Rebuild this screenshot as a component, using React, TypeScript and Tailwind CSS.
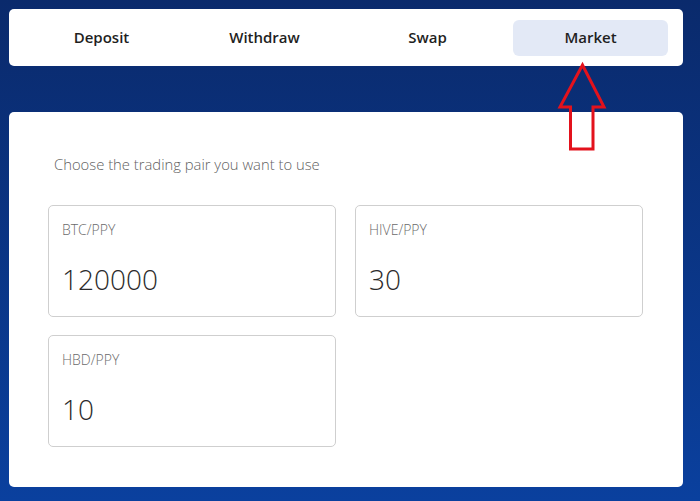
import * as React from "react";

const tabs = ["Deposit", "Withdraw", "Swap", "Market"];

const pairs = [
  { label: "BTC/PPY", value: "120000" },
  { label: "HIVE/PPY", value: "30" },
  { label: "HBD/PPY", value: "10" },
];

function PairBox({ label, value }: { label: string; value: string }) {
  return (
    <div className="flex h-[112px] flex-col rounded-[5px] border border-[#cfcfcf] bg-white pl-[13px] pt-[15px]">
      <span className="text-[14px] font-light leading-[18px] text-[#6b6b6b]">{label}</span>
      <span className="mt-[22px] text-[28px] font-light leading-[36px] text-[#2b2b2b]">{value}</span>
    </div>
  );
}

export default function App() {
  const active = "Market";

  return (
    <div
      className="relative h-[501px] w-[700px] overflow-hidden bg-gradient-to-b from-[#0a2a6c] to-[#0a409e] px-[9px] pt-[9px]"
      style={{ fontFamily: '"Open Sans", "Noto Sans", sans-serif' }}
    >
      <div className="w-[674px]">
        {/* tab bar */}
        <div className="flex h-[57px] items-center rounded-[5px] bg-white px-[11px]">
          {tabs.map((tab) => (
            <div
              key={tab}
              className={
                tab === active
                  ? "mx-[4px] flex h-[36px] flex-1 items-center justify-center rounded-[6px] bg-[#e3e9f6] text-[15px] font-semibold text-[#1f1f1f]"
                  : "mx-[4px] flex h-[36px] flex-1 items-center justify-center text-[15px] font-semibold text-[#1f1f1f]"
              }
            >
              {tab}
            </div>
          ))}
        </div>

        {/* market card */}
        <div className="mt-[46px] h-[375px] rounded-[5px] bg-white pl-[39px] pr-[40px] pt-[41px]">
          <p className="pl-[6px] text-[14.8px] font-light leading-[22px] text-[#5f5f5f]">
            Choose the trading pair you want to use
          </p>
          <div className="mt-[30px] grid grid-cols-2 gap-x-[19px] gap-y-[18px]">
            {pairs.map((p) => (
              <PairBox key={p.label} label={p.label} value={p.value} />
            ))}
          </div>
        </div>
      </div>

      {/* red annotation arrow */}
      <svg className="absolute left-[555px] top-[60px]" width="56" height="95" viewBox="555 60 56 95">
        <polygon
          points="582.5,65 560,107 570.5,107 570.5,149 593,149 593,107 604,107"
          fill="none"
          stroke="#e3121c"
          strokeWidth="3"
          strokeLinejoin="miter"
        />
      </svg>
    </div>
  );
}
